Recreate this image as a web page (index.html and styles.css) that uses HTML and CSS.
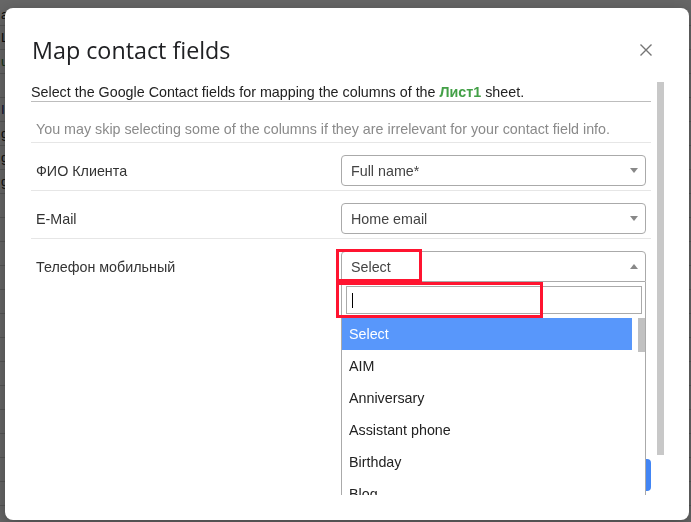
FILE: index.html
```html
<!DOCTYPE html>
<html lang="en">

<head>
    <meta charset="UTF-8">
    <meta name="viewport" content="width=device-width, initial-scale=1.0">
    <title>Map contact fields</title>
    <link rel="stylesheet" href="styles.css">
</head>

<body>
    <!-- spreadsheet behind the modal -->
    <div class="sheet">
        <div class="sheet-row head"><span>a</span></div>
        <div class="sheet-row"><span>Lo</span></div>
        <div class="sheet-row"><span class="green">u</span></div>
        <div class="sheet-row"><span></span></div>
        <div class="sheet-row"><span class="blue">I</span></div>
        <div class="sheet-row"><span>g</span></div>
        <div class="sheet-row"><span>g</span></div>
        <div class="sheet-row"><span>g</span></div>
        <div class="sheet-row"><span></span></div>
        <div class="sheet-row"><span></span></div>
        <div class="sheet-row"><span></span></div>
        <div class="sheet-row"><span></span></div>
        <div class="sheet-row"><span></span></div>
        <div class="sheet-row"><span></span></div>
        <div class="sheet-row"><span></span></div>
        <div class="sheet-row"><span></span></div>
        <div class="sheet-row"><span></span></div>
        <div class="sheet-row"><span></span></div>
        <div class="sheet-row"><span></span></div>
        <div class="sheet-row"><span></span></div>
        <div class="sheet-row"><span></span></div>
    </div>

    <div class="backdrop"></div>

    <div class="dialog">
        <div class="dialog-head">
            <h1>Map contact fields</h1>
            <svg class="close" width="12" height="12" viewBox="0 0 12 12">
                <path d="M0.5 0.5 L11.5 11.5 M11.5 0.5 L0.5 11.5" stroke="#757575" stroke-width="1.4" fill="none" />
            </svg>
        </div>

        <div class="frame">
            <div class="frame-body">
                <div class="content">
                    <p class="intro">Select the Google Contact fields for mapping the columns of the <b>Лист1</b> sheet.</p>
                    <p class="hint">You may skip selecting some of the columns if they are irrelevant for your contact field info.</p>

                    <div class="field-row">
                        <span class="field-name">ФИО Клиента</span>
                        <div class="select"><span>Full name*</span><i class="arrow"></i></div>
                    </div>
                    <div class="field-row">
                        <span class="field-name">E-Mail</span>
                        <div class="select"><span>Home email</span><i class="arrow"></i></div>
                    </div>
                    <div class="field-row">
                        <span class="field-name">Телефон мобильный</span>
                        <div class="select open"><span>Select</span><i class="arrow"></i></div>
                    </div>
                </div>
                <div class="scrollbar"></div>
            </div>

            <div class="frame-foot">
                <button class="btn">Import</button>
            </div>

            <!-- open select dropdown -->
            <div class="dropdown">
                <div class="search"><span class="caret"></span></div>
                <div class="results">
                    <ul>
                        <li class="active">Select</li>
                        <li>AIM</li>
                        <li>Anniversary</li>
                        <li>Assistant phone</li>
                        <li>Birthday</li>
                        <li>Blog</li>
                    </ul>
                    <div class="results-thumb"></div>
                </div>
            </div>
        </div>
    </div>

    <!-- annotation marks -->
    <div class="mark mark-select"></div>
    <div class="mark mark-search"></div>
</body>

</html>
```

FILE: styles.css
```css
* {
    margin: 0;
    padding: 0;
    box-sizing: border-box;
}

body {
    font-family: 'Liberation Sans', Arial, sans-serif;
    font-size: 14.3px;
    color: #222;
    background: #fff;
    height: 522px;
    overflow: hidden;
}

/* sheet behind */
.sheet {
    margin-top: 4px;
}

.sheet-row {
    display: flex;
    align-items: center;
    height: 24px;
    border-bottom: 1px solid #d6d6d6;
    font-size: 13px;
    color: #222;
}

.sheet-row span {
    width: 72px;
    padding-left: 1px;
    white-space: nowrap;
    overflow: hidden;
}

.sheet-row.head {
    height: 22px;
}

.sheet-row .green {
    color: #2e7d32;
}

.sheet-row .blue {
    color: #1a237e;
}

.backdrop {
    position: fixed;
    inset: 0;
    background: rgba(0, 0, 0, 0.6);
}

/* dialog */
.dialog {
    position: fixed;
    left: 5px;
    top: 8px;
    width: 684px;
    height: 512px;
    background: #fff;
    border-radius: 8px;
    box-shadow: 0 4px 16px rgba(0, 0, 0, 0.3);
}

.dialog-head {
    display: flex;
    justify-content: space-between;
    align-items: center;
    padding: 28px 37px 18px 27px;
}

h1 {
    font-family: 'Open Sans', Roboto, sans-serif;
    font-weight: 400;
    font-size: 23.3px;
    line-height: 28px;
    color: #202124;
}

.close {
    display: block;
}

.frame {
    position: relative;
    margin-left: 26px;
    width: 634px;
    height: 413px;
    overflow: hidden;
}

.frame-body {
    display: flex;
    gap: 6px;
    height: 373px;
}

.content {
    width: 620px;
}

.scrollbar {
    width: 7px;
    background: #c8c8c8;
}

.frame-foot {
    display: flex;
    justify-content: flex-end;
    padding: 4px 14px 0 0;
}

.btn {
    width: 90px;
    height: 32px;
    border: none;
    border-radius: 4px;
    background: #4285f4;
    color: #fff;
    font-size: 14px;
}

.intro {
    padding-top: 1px;
    line-height: 18px;
    border-bottom: 1px solid #bdbdbd;
}

.intro b {
    color: #43a047;
}

.hint {
    padding: 18px 5px 4px;
    line-height: 18px;
    color: #8a8a8a;
    border-bottom: 1px solid #e6e6e6;
}

.field-row {
    display: flex;
    justify-content: space-between;
    align-items: center;
    padding: 12px 5px 4px;
    border-bottom: 1px solid #e6e6e6;
    color: #333;
}

.field-row:last-child {
    border-bottom: none;
}

.select {
    display: flex;
    justify-content: space-between;
    align-items: center;
    width: 305px;
    height: 31px;
    padding: 0 7px 0 9px;
    border: 1px solid #aaa;
    border-radius: 4px;
    color: #444;
}

.select.open {
    border-radius: 4px 4px 0 0;
}

.arrow {
    width: 0;
    height: 0;
    border-left: 4px solid transparent;
    border-right: 4px solid transparent;
    border-top: 5px solid #888;
}

.open .arrow {
    border-top: none;
    border-bottom: 5px solid #888;
}

/* dropdown */
.dropdown {
    position: absolute;
    left: 310px;
    top: 200px;
    width: 305px;
    height: 213px;
    padding-top: 4px;
    background: #fff;
    border: 1px solid #aaa;
    border-top: none;
    border-bottom: none;
}

.search {
    display: flex;
    align-items: center;
    height: 28px;
    margin: 0 3px 4px 4px;
    padding-left: 5px;
    border: 1px solid #aaa;
}

.caret {
    width: 1px;
    height: 15px;
    background: #000;
}

.results {
    display: flex;
    gap: 6px;
}

.results ul {
    width: 290px;
    list-style: none;
}

.results li {
    height: 32px;
    line-height: 32px;
    padding-left: 7px;
    color: #222;
}

.results li.active {
    background: #5897fb;
    color: #fff;
}

.results-thumb {
    width: 7px;
    height: 34px;
    background: #c1c1c1;
}

/* red annotation boxes */
.mark {
    position: absolute;
    border: 3px solid #ff1430;
}

.mark-select {
    left: 336px;
    top: 249px;
    width: 86px;
    height: 33px;
}

.mark-search {
    left: 336px;
    top: 282px;
    width: 207px;
    height: 36px;
}
```
